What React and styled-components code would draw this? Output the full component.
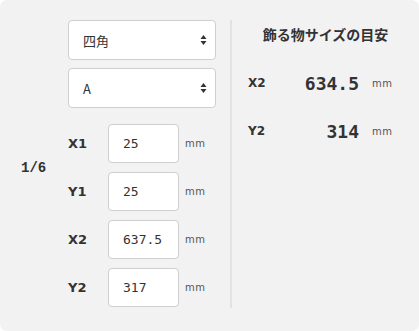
import styled, { createGlobalStyle } from 'styled-components';

const GlobalStyle = createGlobalStyle`
  html, body {
    margin: 0;
    padding: 0;
    background: #ffffff;
  }
  body {
    font-family: "DejaVu Sans", "Noto Sans CJK JP", sans-serif;
    color: #333;
  }
`;

const Panel = styled.div`
  display: flex;
  width: 419px;
  height: 331px;
  background: #f2f2f2;
  border-radius: 7px;
  box-sizing: border-box;
  padding: 20px 0 23px;
`;

const LeftColumn = styled.div`
  width: 232px;
  border-right: 2px solid #e2e2e2;
  box-sizing: border-box;
  display: flex;
  flex-direction: column;
`;

const SelectStack = styled.div`
  display: flex;
  flex-direction: column;
  gap: 8px;
  margin-left: 68px;
  width: 148px;
`;

const SelectBox = styled.div`
  display: flex;
  align-items: center;
  justify-content: space-between;
  height: 40px;
  box-sizing: border-box;
  padding: 0 8px 0 14px;
  background: #fff;
  border: 1px solid #cfcfcf;
  border-radius: 4px;
  font-family: "Noto Sans CJK JP", "DejaVu Sans", sans-serif;
  font-size: 13px;
  color: #333;
`;

const Arrows = styled.svg`
  width: 7px;
  height: 12px;
`;

const FieldGrid = styled.div`
  display: grid;
  grid-template-columns: 68px 40px 71px auto;
  grid-auto-rows: 39px;
  row-gap: 9px;
  margin-top: 16px;
  align-items: center;
`;

const Ratio = styled.div`
  grid-row: 1 / span 2;
  grid-column: 1;
  padding-left: 21px;
  font-family: "Liberation Mono", monospace;
  font-size: 14px;
  font-weight: bold;
  color: #333;
`;

const Label = styled.div`
  grid-column: 2;
  grid-row: ${(p) => p.$row};
  font-family: "DejaVu Sans", sans-serif;
  font-weight: bold;
  font-size: 13px;
  color: #333;
`;

const Input = styled.input`
  grid-column: 3;
  grid-row: ${(p) => p.$row};
  width: 71px;
  height: 39px;
  box-sizing: border-box;
  border: 1px solid #cfcfcf;
  border-radius: 4px;
  background: #fff;
  padding: 0 0 0 14px;
  font-family: "DejaVu Sans Mono", monospace;
  font-size: 13px;
  color: #333;
  outline: none;
`;

const Unit = styled.div`
  grid-column: 4;
  grid-row: ${(p) => p.$row};
  padding-left: 6px;
  font-family: "DejaVu Sans", sans-serif;
  font-size: 10px;
  letter-spacing: 0.5px;
  color: #555;
`;

const RightColumn = styled.div`
  flex: 1;
  display: flex;
  flex-direction: column;
  padding-left: 16px;
`;

const Title = styled.div`
  text-align: center;
  padding-right: 16px;
  margin-top: 4px;
  font-family: "Noto Sans CJK JP", sans-serif;
  font-weight: bold;
  font-size: 14px;
  color: #333;
`;

const ResultList = styled.div`
  display: grid;
  grid-template-columns: 30px 81px auto;
  grid-auto-rows: 24px;
  row-gap: 24px;
  margin-top: 27px;
  align-items: center;
`;

const ResultLabel = styled.div`
  font-family: "DejaVu Sans", sans-serif;
  font-weight: bold;
  font-size: 12px;
  color: #333;
`;

const ResultValue = styled.div`
  text-align: right;
  font-family: "DejaVu Sans Mono", monospace;
  font-weight: bold;
  font-size: 18px;
  color: #333;
`;

const ResultUnit = styled.div`
  padding-left: 13px;
  font-family: "DejaVu Sans", sans-serif;
  font-size: 10px;
  letter-spacing: 0.5px;
  color: #555;
`;

const SortArrows = () => (
  <Arrows viewBox="0 0 7 12">
    <path d="M3.5 1 L6.5 5 L0.5 5 Z" fill="#333" />
    <path d="M3.5 11 L6.5 7 L0.5 7 Z" fill="#333" />
  </Arrows>
);

const fields = [
  { label: 'X1', value: '25' },
  { label: 'Y1', value: '25' },
  { label: 'X2', value: '637.5' },
  { label: 'Y2', value: '317' },
];

const results = [
  { label: 'X2', value: '634.5' },
  { label: 'Y2', value: '314' },
];

const FieldRow = ({ label, value, row }) => (
  <>
    <Label $row={row}>{label}</Label>
    <Input $row={row} defaultValue={value} />
    <Unit $row={row}>mm</Unit>
  </>
);

const Result = ({ label, value }) => (
  <>
    <ResultLabel>{label}</ResultLabel>
    <ResultValue>{value}</ResultValue>
    <ResultUnit>mm</ResultUnit>
  </>
);

export default function App() {
  return (
    <>
      <GlobalStyle />
      <Panel>
        <LeftColumn>
          <SelectStack>
            <SelectBox>
              四角
              <SortArrows />
            </SelectBox>
            <SelectBox>
              A
              <SortArrows />
            </SelectBox>
          </SelectStack>
          <FieldGrid>
            <Ratio>1/6</Ratio>
            {fields.map((f, i) => (
              <FieldRow key={f.label + i} row={i + 1} {...f} />
            ))}
          </FieldGrid>
        </LeftColumn>
        <RightColumn>
          <Title>飾る物サイズの目安</Title>
          <ResultList>
            {results.map((r) => (
              <Result key={r.label} {...r} />
            ))}
          </ResultList>
        </RightColumn>
      </Panel>
    </>
  );
}
